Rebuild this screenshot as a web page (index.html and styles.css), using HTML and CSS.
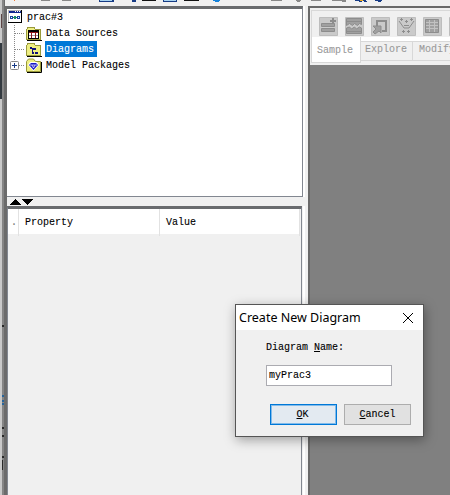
FILE: index.html
```html
<!DOCTYPE html>
<html lang="en">
<head>
<meta charset="utf-8">
<title>prac#3</title>
<link rel="stylesheet" href="styles.css">
</head>
<body>
<svg class="backdrop" viewBox="0 0 7 495" shape-rendering="crispEdges">
  <path fill="#c9c9c9" d="M0 0h7v495H0z"/><path fill="#333a40" d="M0 43h2v56H0z"/><path fill="#5c4545" d="M1 14h2v14H1z"/>
  <path fill="#858585" d="M2 0h2v495H2z"/><path fill="#6b6b6b" d="M4 0h3v495H4z"/>
  <path fill="#28649a" d="M2 395h2v2H2zM2 400h2v2H2zM2 403h2v2H2z"/>
  <path fill="#292929" d="M2 427h2v2H2zM2 435h2v2H2zM2 456h2v2H2zM2 460h1v10H2zM2 325h2v2H2z"/>
</svg>
<div class="app">
  <div class="toolbar">
    <svg viewBox="0 0 445 6" shape-rendering="crispEdges">
      <path fill="#ef7c39" d="M9 0h1v1H9z"/><path fill="#888" d="M36 0h9v1h-9zM57 0h9v1h-9zM266 0h11v1h-11zM291 0h5v1h-5zM292 1h3v1h-3zM306 0h10v1h-10zM327 0h14v1h-14zM337 1h4v1h-4z"/>
      <path fill="#163b85" d="M94 0h15v2H94zM127 0h4v2h-4zM158 0h14v2h-14zM350 0h11v1h-11zM354 1h3v1h-3zM359 1h3v1h-3zM370 0h7v1h-7zM373 1h3v1h-3z"/>
      <path fill="#a8d3f0" d="M95 0h12v1H95zM159 0h12v1h-12z"/>
      <path fill="#111" d="M137 0h14v1h-14zM179 0h15v1h-15z"/><path fill="#1683db" d="M208 0h7v1h-7zM210 1h4v1h-4z"/><path fill="#efaa20" d="M355 0h3v1h-3z"/>
    </svg>
  </div>
  <div class="workspace">
    <section class="left">
      <div class="tree">
        <div class="node root">
          <svg class="rooticon" viewBox="0 0 14 13" shape-rendering="crispEdges"><path d="M0 0h14v13H0z"/><path fill="#b9b9b9" d="M0 0h13v12H0z"/><path fill="#10288f" d="M1 1h12v2H1z"/><path fill="#fff" d="M1 3h12v9H1zM7 1h1v1H7zM9 1h1v1H9zM11 1h1v1h-1z"/><path fill="#1745a0" d="M2 6h3v3H2zM9 6h3v3H9z"/><path fill="#168a65" d="M5 7h4v1H5zM6 6h2v3H6z"/><path fill="#fff" d="M3 7h1v1H3zM10 7h1v1h-1z"/></svg>
          <span>prac#3</span>
        </div>
        <div class="node">
          <svg class="branch" viewBox="0 0 18 16"><path d="M7.500 0v16M8 8.500h10"/></svg>
          <svg class="folder" viewBox="0 0 16 15" shape-rendering="crispEdges"><path class="body" d="M.5 13.500v-10l2-2.500h5l2 2.500h5v10z"/><path class="edge" d="M1 14h15V4"/><path fill="#fff" d="M3 5h10v8H3z"/><path d="M2 4h11v2H2zM2 4h1v9H2zM12 4h1v9h-1zM2 12h11v1H2z"/><path fill="#8c1818" d="M3 6h9v1H3zM5 7h1v5H5zM9 7h1v5H9z"/><path fill="#999" d="M3 9h2v1H3zM6 9h3v1H6zM10 9h2v1h-2z"/></svg>
          <span>Data Sources</span>
        </div>
        <div class="node">
          <svg class="branch" viewBox="0 0 18 16"><path d="M7.500 0v16M8 8.500h10"/></svg>
          <svg class="folder" viewBox="0 0 16 15" shape-rendering="crispEdges"><path class="body" d="M.5 13.500v-10l2-2.500h5l2 2.500h5v10z"/><path class="edge" d="M1 14h15V4"/><path fill="#10107a" d="M4 5h2v2H4zM7 6h3v2H7zM6 10h2v2H6zM9 10h3v2H9zM6 6h1v5H6z"/></svg>
          <span class="selected">Diagrams</span>
        </div>
        <div class="node">
          <svg class="branch" viewBox="0 0 18 16"><path d="M7.500 0v4M12 8.500h6"/><rect x="3.500" y="4.500" width="8" height="8" rx="1"/><path class="plus" d="M5 8.500h5M7.500 6v5"/></svg>
          <svg class="folder" viewBox="0 0 16 15"><path class="body" d="M.5 13.500v-10l2-2.500h5l2 2.500h5v10z"/><path class="edge" d="M1 14.500h14.500V4"/><path fill="#fff" d="M2 7l2-3h7l2 3-5.500 6z"/><path fill="#1717c8" d="M3 7l2-2h5l2 2-4.500 5z"/><path fill="none" stroke="#fff" stroke-width=".7" d="M4 7h7M6 7l1.500 3L9 7"/></svg>
          <span>Model Packages</span>
        </div>
      </div>
      <div class="splitter"><svg viewBox="0 0 24 6" shape-rendering="crispEdges"><path d="M0 6l6-6 6 6zM12 0h12l-6 6z"/></svg></div>
      <div class="properties"><div class="header"><span>.</span><span>Property</span><span>Value</span></div></div>
    </section>
    <section class="right">
      <div class="palette">
        <div class="tools">
          <svg viewBox="0 0 19 19"><path class="tile" d="M.5.500h18v18H.5z"/><path class="fill" d="M2.500 6.500h13v3h-13zM2.500 11.500h13v3h-13z"/><path class="thick" d="M11 4h6M14 1v6"/></svg>
          <svg viewBox="0 0 19 19"><path class="tile" d="M.5.500h18v18H.5z"/><path class="fill" d="M1.500 1.500h15v6l-2-1-2 2-3-2-2 2-3-2-3 2zM1.500 11l3-1 2 2 3-2 2 2 3-2 2 1v5.500h-15z"/><path class="line" d="M2 4.500h14M2 14.500h14"/></svg>
          <svg viewBox="0 0 19 19"><path class="tile" d="M.5.500h18v18H.5z"/><path class="thick" d="M6 9V4h9v10h-4"/><path class="fill" d="M2 9h8v7l-2-2-4 3-2-2 3-3z"/></svg>
          <svg viewBox="0 0 19 19"><path class="tile" d="M.5.500h18v18H.5z"/><path class="line" d="M2 4l5 7h5l5-7M3 2.500h3M4.500 1v3M8 4.500h3M9.500 3v3M13 2.500h3M14.500 1v3M7 8.500h5M5 14.500h3M6.500 13v3M10 14.500h3M11.500 13v3"/></svg>
          <svg viewBox="0 0 19 19"><path class="tile" d="M.5.500h18v18H.5z"/><path class="fill" d="M2.500 2.500h13v13h-13z"/><path class="grid" d="M3 5.500h12M3 8.500h12M3 11.500h12M6.500 3v12M11.500 3v12"/></svg>
          <svg viewBox="0 0 19 19"><path class="tile" d="M.5.500h18v18H.5z"/></svg>
        </div>
        <div class="tabs"><span class="active">Sample</span><span>Explore</span><span>Modify</span></div>
      </div>
    </section>
  </div>
</div>
<div class="dialog" role="dialog">
  <div class="title"><span>Create New Diagram</span><svg viewBox="0 0 10 10"><path d="M0 0l10 10M10 0L0 10"/></svg></div>
  <div class="form">
    <div class="label">Diagram <u>N</u>ame:</div>
    <div class="input">myPrac3</div>
    <div class="buttons"><div class="button primary"><u>O</u>K</div><div class="button"><u>C</u>ancel</div></div>
  </div>
</div>
</body>
</html>
```
FILE: styles.css
```css
* { box-sizing: border-box; }
body { margin: 0; width: 450px; height: 495px; overflow: hidden; display: flex; background: #f0f0f0; font: 10px/16px "Liberation Mono", monospace; color: #000; -webkit-text-stroke: .1px; }
svg { display: block; flex: none; }
span, .label, .input, .button { white-space: pre; }
.backdrop { width: 7px; height: 495px; }
.app { width: 443px; display: flex; flex-direction: column; }
.toolbar { height: 6px; background: #f0f0f0; margin-left: -2px; position: relative; }
.toolbar svg { width: 445px; height: 6px; }
.workspace { flex: 1; display: flex; }
.left { width: 301px; display: flex; flex-direction: column; background: linear-gradient(90deg, #f0f0f0 296px, #fff 296px, #fff 298px, #f0f0f0 298px); }
.tree { width: 296px; height: 191px; background: #fff; border: 1px solid #828790; border-left: 0; border-top: 3px solid #696b6e; }
.node { height: 16px; display: flex; align-items: center; }
.node > span { line-height: 16px; height: 16px; margin-left: 3px; padding: 1px 1px 0; }
.node > .selected { background: #0078d7; color: #fff; width: 52px; height: 16px; line-height: 16px; }
.node.root { padding-left: 1px; align-items: flex-start; padding-top: 1px; }
.root > span { margin-left: 4px; margin-top: -1px; }
.rooticon { width: 14px; height: 13px; }
.branch { width: 18px; height: 16px; fill: none; stroke: #888; stroke-dasharray: 1 1; }
.branch rect { fill: #fff; stroke-dasharray: none; }
.branch .plus { stroke: #173b86; stroke-dasharray: none; }
.folder { width: 16px; height: 15px; margin-left: 1px; }
.body { fill: #eeee82; stroke: #99993b; }
.edge { fill: none; stroke: #000; }
.splitter { height: 9px; padding: 2px 0 0 2px; background: #f0f0f0; }
.splitter svg { width: 24px; height: 6px; }
.properties { flex: 1; width: 295px; border-top: 3px solid #696b6e; border-right: 1px solid #828790; border-left: 1px solid #828790; }
.header { height: 25px; width: 292px; display: grid; grid-template-columns: 11px 141px 140px; background: #fff; line-height: 27px; }
.header span { border-right: 1px solid #e2e2e2; padding-left: 6px; }
.header span:first-child { padding-left: 3px; color: #777; }
.right { width: 142px; background: #808080; border-left: 2px solid #696969; border-top: 2px solid #696969; }
.palette { height: 57px; background: #f0f0f0; padding: 2px 0 0 1px; }
.tools { height: 27px; border: 1px solid #d8d8d8; border-right: 0; border-bottom: 0; padding: 6px 0 0 7px; display: flex; gap: 7px; overflow: hidden; }
.tools svg { width: 19px; height: 19px; }
.tile { fill: #cacaca; stroke: #bdbdbd; }
.fill { fill: #a0a0a0; stroke: #8d8d8d; }
.line { fill: none; stroke: #8d8d8d; }
.thick { fill: none; stroke: #8d8d8d; stroke-width: 2; }
.grid { fill: none; stroke: #c2c2c2; }
.tabs { display: flex; height: 26px; padding-top: 4px; background: linear-gradient(#fff 4px, #f0f0f0 4px); color: #999; }
.tabs span { flex: none; width: 52px; height: 20px; border: 1px solid #d8d8d8; border-left: 0; border-right-color: #d8d8d8; padding-left: 4px; line-height: 16px; }
.tabs .active { width: 50px; height: 26px; margin-top: -4px; background: #fff; border-top: 0; border-left: 1px solid #d8d8d8; padding: 6px 0 0 5px; }
.tabs span:last-child { padding-left: 6px; }
.dialog { position: absolute; left: 235px; top: 304px; width: 189px; height: 133px; background: #f0f0f0; border: 1px solid #555; box-shadow: 1px 3px 11px rgba(0,0,0,.35); }
.title { height: 25px; background: #fff; display: flex; justify-content: space-between; padding: 0 10px 0 3px; align-items: center; font: 12.5px/24px "Noto Sans", sans-serif; -webkit-text-stroke: 0; }
.title svg { width: 10px; height: 10px; overflow: visible; stroke: #000; }
.form { padding: 10px 0 0 30px; }
.label { line-height: 16px; }
.input { margin-top: 9px; width: 126px; height: 21px; border: 1px solid #ababb1; background: #fff; padding-left: 2px; line-height: 19px; }
.buttons { display: flex; gap: 7px; margin: 18px 0 0 4px; }
.button { width: 67px; height: 21px; border: 1px solid #adadad; background: #e1e1e1; text-align: center; line-height: 19px; }
.primary { border-color: #0078d7; background: #e3eaf1; padding-right: 2px; box-shadow: inset 0 0 0 1px #82bbea; }
u { text-underline-offset: 1px; }
```
